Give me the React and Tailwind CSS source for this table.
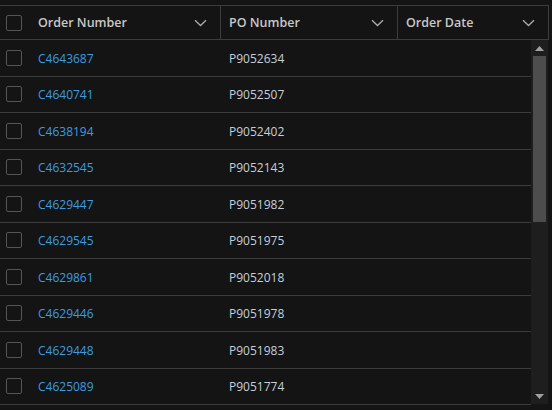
import React from "react";

const rows = [
  ["C4643687", "P9052634"],
  ["C4640741", "P9052507"],
  ["C4638194", "P9052402"],
  ["C4632545", "P9052143"],
  ["C4629447", "P9051982"],
  ["C4629545", "P9051975"],
  ["C4629861", "P9052018"],
  ["C4629446", "P9051978"],
  ["C4629448", "P9051983"],
  ["C4625089", "P9051774"],
];

function Chevron() {
  return (
    <svg width="13" height="8" viewBox="0 0 13 8" className="shrink-0 mt-[1px]">
      <path d="M1 1.2 L6.5 6.5 L12 1.2" fill="none" stroke="#a8a8a8" strokeWidth="1.4" />
    </svg>
  );
}

function Box() {
  return <div className="w-[16px] h-[16px] rounded-[2px] border border-[#555555] shrink-0" />;
}

function HeaderCell({ label, className }) {
  return (
    <div className={`flex items-center justify-between pl-[8px] pr-[13px] h-full ${className}`}>
      <span className="font-semibold text-[12.5px] text-[#c8c8c8] pt-[2px]">{label}</span>
      <Chevron />
    </div>
  );
}

export default function App() {
  return (
    <div
      className="w-[552px] h-[410px] bg-[#141414] pt-[5px] overflow-hidden"
      style={{ fontFamily: '"Open Sans", "Noto Sans", sans-serif' }}
    >
      {/* header */}
      <div className="flex w-[549px] h-[35px] border-y border-r border-[#3c3c3c]">
        <div className="w-[30px] flex items-center pl-[6px]">
          <Box />
        </div>
        <HeaderCell label="Order Number" className="w-[191px] border-r border-[#3c3c3c]" />
        <HeaderCell label="PO Number" className="w-[177px] border-r border-[#3c3c3c]" />
        <HeaderCell label="Order Date" className="flex-1" />
      </div>

      {/* body */}
      <div className="flex w-[548px]">
        <div className="w-[531px]">
          {rows.map(([order, po]) => (
            <div key={order} className="flex items-center h-[36.5px] border-b border-[#3c3c3c] text-[12px]">
              <div className="w-[30px] flex items-center pl-[6px]">
                <Box />
              </div>
              <div className="w-[191px] pl-[8px] pt-[2px] text-[#3d9be0]">{order}</div>
              <div className="w-[177px] pl-[8px] pt-[2px] text-[#c5cfdb]">{po}</div>
            </div>
          ))}
        </div>

        {/* scrollbar */}
        <div className="w-[17px] h-[364px] bg-[#1e1e1e] flex flex-col items-center">
          <div className="h-[16px] flex items-center justify-center">
            <svg width="9" height="5" viewBox="0 0 9 5">
              <path d="M4.5 0 L9 5 L0 5 Z" fill="#a0a0a0" />
            </svg>
          </div>
          <div className="w-[13px] h-[166px] bg-[#4d4d4d]" />
          <div className="flex-1" />
          <div className="h-[16px] flex items-center justify-center">
            <svg width="9" height="5" viewBox="0 0 9 5">
              <path d="M0 0 L9 0 L4.5 5 Z" fill="#a0a0a0" />
            </svg>
          </div>
        </div>
      </div>
    </div>
  );
}
